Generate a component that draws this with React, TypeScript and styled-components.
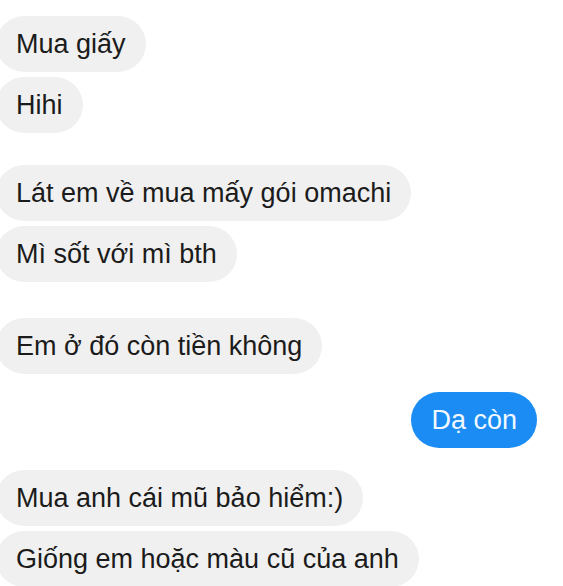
import React from "react";
import styled, { createGlobalStyle } from "styled-components";

const Global = createGlobalStyle`
  html, body { margin: 0; padding: 0; background: #ffffff; overflow: hidden; }
  body { font-family: "Liberation Sans", Arial, "Noto Sans", sans-serif; }
`;

const Thread = styled.div`
  width: 563px;
  height: 586px;
  display: flex;
  flex-direction: column;
  padding-top: 16px;
  box-sizing: border-box;
  overflow: hidden;
`;

const Group = styled.div<{ $mine?: boolean; $gap: number }>`
  display: flex;
  flex-direction: column;
  gap: 5px;
  align-items: ${(p) => (p.$mine ? "flex-end" : "flex-start")};
  margin-top: ${(p) => p.$gap}px;
  margin-left: ${(p) => (p.$mine ? "0" : "-4px")};
  margin-right: ${(p) => (p.$mine ? "26px" : "0")};
`;

const Bubble = styled.div<{ $mine?: boolean }>`
  box-sizing: border-box;
  height: 56px;
  padding: 0 20px;
  display: flex;
  align-items: center;
  font-size: 27px;
  line-height: 30px;
  white-space: nowrap;
  border-radius: 28px;
  background: ${(p) => (p.$mine ? "#1a8cf3" : "#f0f0f0")};
  color: ${(p) => (p.$mine ? "#f2f8ff" : "#1b1b1b")};
`;

type Msg = { mine?: boolean; gap: number; lines: string[] };

const groups: Msg[] = [
  { gap: 0, lines: ["Mua giấy", "Hihi"] },
  { gap: 32, lines: ["Lát em về mua mấy gói omachi", "Mì sốt với mì bth"] },
  { gap: 36, lines: ["Em ở đó còn tiền không"] },
  { gap: 18, mine: true, lines: ["Dạ còn"] },
  { gap: 22, lines: ["Mua anh cái mũ bảo hiểm:)", "Giống em hoặc màu cũ của anh"] },
];

export default function App() {
  return (
    <>
      <Global />
      <Thread>
        {groups.map((g, i) => (
          <Group key={i} $mine={g.mine} $gap={g.gap}>
            {g.lines.map((t, j) => (
              <Bubble key={j} $mine={g.mine}>
                {t}
              </Bubble>
            ))}
          </Group>
        ))}
      </Thread>
    </>
  );
}
